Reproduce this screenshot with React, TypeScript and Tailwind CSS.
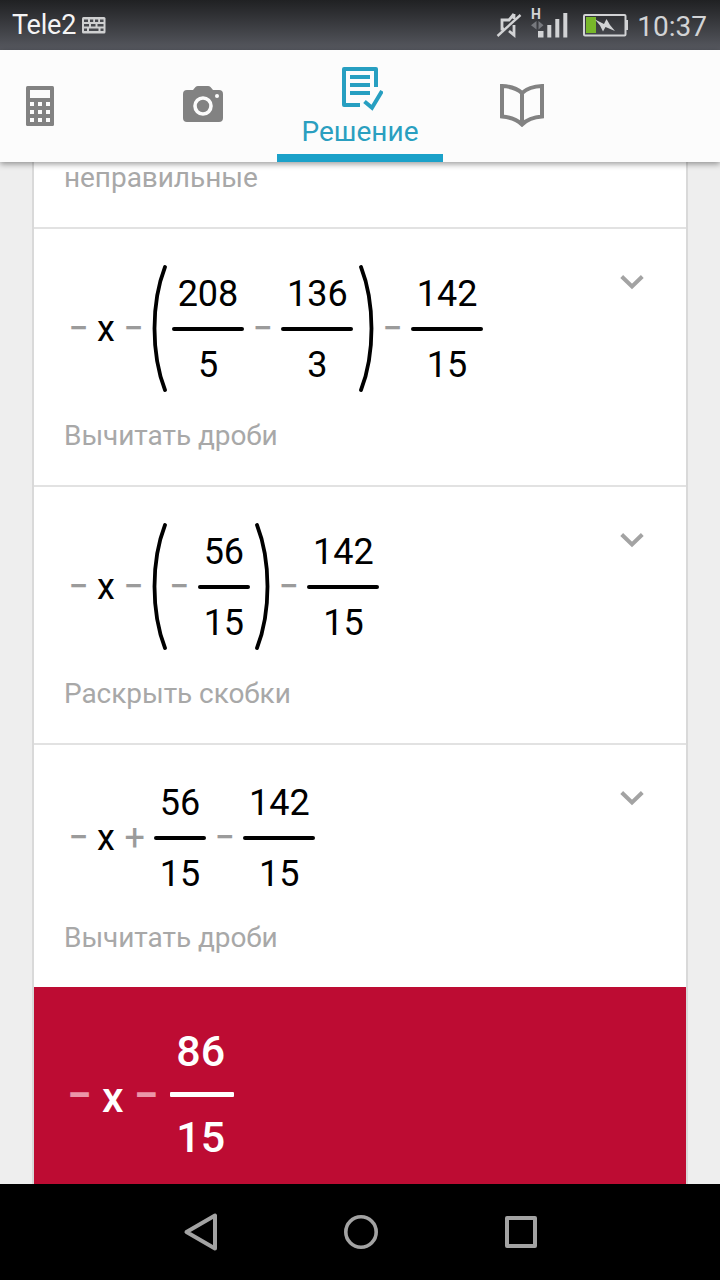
import React from 'react';

type Term =
  | { kind: 'op'; value: string }
  | { kind: 'var'; value: string }
  | { kind: 'frac'; top: string; bottom: string }
  | { kind: 'group'; terms: Term[] };

interface Step {
  terms: Term[];
  hint: string;
}

const op = (value: string): Term => ({ kind: 'op', value });
const frac = (top: string, bottom: string): Term => ({ kind: 'frac', top, bottom });
const x: Term = { kind: 'var', value: 'x' };

const steps: Step[] = [
  {
    terms: [op('−'), x, op('−'), { kind: 'group', terms: [frac('208', '5'), op('−'), frac('136', '3')] }, op('−'), frac('142', '15')],
    hint: 'Вычитать дроби',
  },
  {
    terms: [op('−'), x, op('−'), { kind: 'group', terms: [op('−'), frac('56', '15')] }, op('−'), frac('142', '15')],
    hint: 'Раскрыть скобки',
  },
  {
    terms: [op('−'), x, op('+'), frac('56', '15'), op('−'), frac('142', '15')],
    hint: 'Вычитать дроби',
  },
];

const Paren: React.FC<{ side: 'left' | 'right' }> = ({ side }) => (
  <svg width="15" height="127" viewBox="0 0 15 127" className={side === 'right' ? 'shrink-0 -scale-x-100' : 'shrink-0'} fill="none" stroke="#000" strokeWidth="3.8" strokeLinecap="round">
    <path d="M13 2C-1 38 -1 89 13 125" />
  </svg>
);

const Fraction: React.FC<{ top: string; bottom: string }> = ({ top, bottom }) => (
  <div className="flex h-[113px] flex-col items-center pt-px">
    <span className="shrink-0 px-[5.7px] leading-[42px]">{top}</span>
    <span className="mt-3 mb-[13px] h-1 w-full shrink-0 rounded-full bg-black" />
    <span className="shrink-0 leading-[42px]">{bottom}</span>
  </div>
);

const Terms: React.FC<{ terms: Term[] }> = ({ terms }) => (
  <>
    {terms.map((term, i) => {
      if (term.kind === 'op') {
        return (
          <span key={i} className={`flex justify-center leading-[42px] text-[#9b9b9b] ${i === 0 ? 'mr-[11px]' : 'mr-[11px] ml-[11.3px]'} ${term.value === '−' ? 'w-[15px] text-[35px] font-medium' : 'w-[17px] text-[36px]'}`}>
            {term.value}
          </span>
        );
      }
      if (term.kind === 'var') {
        return <span key={i} className="pt-px leading-[42px]">{term.value}</span>;
      }
      if (term.kind === 'frac') {
        return <Fraction key={i} top={term.top} bottom={term.bottom} />;
      }
      return (
        <div key={i} className="-ml-[0.5px] flex items-center gap-[5.3px]">
          <Paren side="left" />
          <div className="flex items-center">
            <Terms terms={term.terms} />
          </div>
          <Paren side="right" />
        </div>
      );
    })}
  </>
);

const StepRow: React.FC<Step> = ({ terms, hint }) => (
  <div className="flex justify-between border-b-2 border-[#e2e2e2] pt-9 pr-[42px] pb-[33px] pl-[30px] last:border-b-0">
    <div className="flex flex-col">
      <div className="flex items-center pl-[7px] text-[36px] text-black">
        <Terms terms={terms} />
      </div>
      <span className="mt-[27px] text-[28px] leading-[33px] tracking-[-0.06px] text-[#a8a8a8]">{hint}</span>
    </div>
    <svg width="24" height="16" viewBox="0 0 24 16" className="mt-[9px]" fill="none" stroke="#a3a3a3" strokeWidth="4">
      <path d="M1.7 2.5L12 12.5L22.3 2.5" />
    </svg>
  </div>
);

const StatusBar = () => (
  <div className="flex h-[50px] shrink-0 items-center justify-between bg-gradient-to-b from-[#202123] to-[#575960] px-3 text-[28px] leading-[33px]">
    <div className="flex items-center gap-[6px]">
      <span className="pt-px text-[27px] tracking-[-0.2px] text-[#f4f4f4]">Tele2</span>
      <svg width="24" height="17" viewBox="0 0 24 17">
        <rect width="23.5" height="16.5" rx="1.5" fill="#cfd0d1" />
        <path d="M2 3.7h4M8 3.7h3.2M13 3.7h3.2M18 3.7h3.5M2 8.2h5M9 8.2h4.5M15.5 8.2h6M2 12.8h3M7 12.8h9.5M18.5 12.8h3" stroke="#47494e" strokeWidth="2.5" />
      </svg>
    </div>
    <div className="flex items-center pr-px text-[#d2d3d5]">
      <svg width="140" height="50" viewBox="492 0 140 50" fill="none">
        <path d="M514 14L509 20H502V29H504M514 14V19M509 31L514 35V25" stroke="#d2d3d5" strokeWidth="2.8" />
        <path d="M497.5 36L520.5 15" stroke="#d2d3d5" strokeWidth="2.4" />
        <text x="531" y="19" fill="#d2d3d5" className="text-[14px] font-bold">H</text>
        <path d="M536.5 21V29.5L531 25.2ZM538.5 21V29.5L543.5 25.2Z" fill="#77797e" />
        <path d="M538 31h5.5v6.5H538ZM547.3 25h4v12.5h-4ZM555.3 19h4v18.5h-4ZM563.3 13h4v24.5h-4Z" fill="#d2d3d5" />
        <rect x="584" y="15" width="41.5" height="20.5" rx="1" stroke="#d2d3d5" strokeWidth="2" />
        <path d="M626 20h2v10h-2Z" fill="#d2d3d5" />
        <path d="M586 17h10v16h-10Z" fill="#78b72a" />
        <path d="M595 19.5L604 24L606.5 19L610 25L615 31L605.5 27L603 31.5L600 25.5Z" fill="#d2d3d5" />
      </svg>
      <span className="ml-[5px] pt-[2px]">10:37</span>
    </div>
  </div>
);

const TabBar = () => (
  <div className="z-10 flex h-28 shrink-0 bg-[#fcfcfc] shadow-[0_2px_6px_rgba(0,0,0,0.4)]">
    <div className="flex w-[129px] items-center pl-[26px]">
      <svg width="28" height="40" viewBox="0 0 28 40">
        <rect width="28" height="40" rx="1.5" fill="#828282" />
        <path d="M4 4h20v8H4ZM4 16h4v4H4ZM12 16h4v4h-4ZM20 16h4v4h-4ZM4 24h4v4H4ZM12 24h4v4h-4ZM20 24h4v4h-4ZM4 32h4v4H4ZM12 32h4v4h-4ZM20 32h4v4h-4Z" fill="#fcfcfc" />
      </svg>
    </div>
    <div className="flex w-[148px] justify-center pt-9">
      <svg width="40" height="36" viewBox="0 0 40 36">
        <path d="M15 0H25Q26.5 0 27.5 1L30 4H36Q40 4 40 8V32Q40 36 36 36H4Q0 36 0 32V8Q0 4 4 4H10L12.5 1Q13.5 0 15 0Z" fill="#828282" />
        <circle cx="20" cy="20" r="8" fill="none" stroke="#fcfcfc" strokeWidth="3.6" />
        <circle cx="34" cy="10" r="2" fill="#fcfcfc" />
      </svg>
    </div>
    <div className="flex w-[166px] flex-col items-center border-b-8 border-[#1ba1c9] pt-4">
      <svg width="46" height="46" viewBox="-3 0 46 46" fill="none" stroke="#279fc1" strokeWidth="4">
        <path d="M36 21V3H4V39H20" strokeLinejoin="round" />
        <path d="M10 11H30M10 19H30M10 27H30" />
        <path d="M24.5 35.5L32 41.8L42 25" />
      </svg>
      <span className="mt-[3px] text-[28px] leading-[33px] text-[#2a9fc0]">Решение</span>
    </div>
    <div className="flex w-[158px] justify-center pt-[33px]">
      <svg width="44" height="44" viewBox="0 0 44 44" fill="none" stroke="#828282" strokeWidth="4">
        <path d="M22 10Q15 3.5 2 3V33.5Q15 34.5 22 41.5Q29 34.5 42 33.5V3Q29 3.5 22 10ZM22 10V41" />
      </svg>
    </div>
  </div>
);

const Result = () => (
  <div className="flex h-[197px] shrink-0 items-start bg-[#bd0c33] pt-[38px] pl-[36px] text-[43px] font-medium text-white">
    <div className="flex items-center">
      <span className="flex w-[19px] justify-center pt-px text-[44px] leading-[52px] font-bold text-[#ec96a9]">−</span>
      <span className="mx-[13px] pt-[5px] leading-[52px]">x</span>
      <span className="flex w-[19px] justify-center pt-px text-[44px] leading-[52px] font-bold text-[#ec96a9]">−</span>
      <div className="ml-[14px] flex w-16 flex-col items-center">
        <span className="pr-[2px] leading-[52px]">86</span>
        <span className="mt-[15px] mb-[14px] h-[5px] w-full rounded-[1px] bg-white" />
        <span className="pr-[2px] leading-[52px]">15</span>
      </div>
    </div>
  </div>
);

const NavBar = () => (
  <div className="flex h-24 shrink-0 items-center gap-[125px] bg-black pl-[183px]">
    <svg width="36" height="40" viewBox="0 0 36 40" fill="none" stroke="#a3a3a3" strokeWidth="4" strokeLinejoin="round">
      <path d="M32 3.5V36.5L3.5 20Z" />
    </svg>
    <svg width="36" height="36" viewBox="0 0 36 36" fill="none" stroke="#a3a3a3" strokeWidth="3.6">
      <circle cx="17" cy="18" r="15.2" />
    </svg>
    <svg width="32" height="32" viewBox="0 0 32 32" fill="none" stroke="#a3a3a3" strokeWidth="4" strokeLinejoin="round">
      <path d="M2 2H30V30H2Z" />
    </svg>
  </div>
);

export default function App() {
  return (
    <div className="flex h-[1280px] w-[720px] flex-col overflow-hidden bg-[#eeeeee] font-[Roboto,sans-serif]">
      <StatusBar />
      <TabBar />
      <div className="mx-8 flex flex-1 flex-col overflow-hidden border-x-2 border-[#d9d9d9] bg-white">
        <div className="flex h-[67px] shrink-0 border-b-2 border-[#e2e2e2] pl-[30px]">
          <span className="-mt-px text-[28px] leading-[33px] tracking-[-0.06px] text-[#a8a8a8]">неправильные</span>
        </div>
        <div className="flex flex-col">
          {steps.map((step, i) => (
            <StepRow key={i} {...step} />
          ))}
        </div>
        <Result />
      </div>
      <NavBar />
    </div>
  );
}
